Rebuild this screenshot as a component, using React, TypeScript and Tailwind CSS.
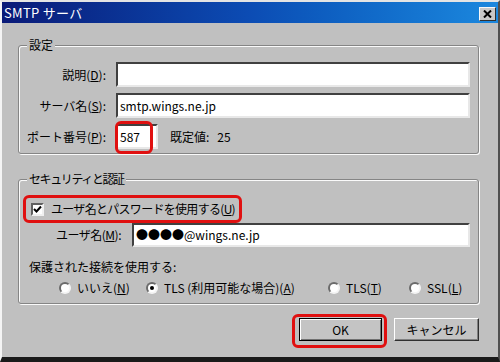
import React from 'react';

const font = { fontFamily: '"Noto Sans CJK JP", sans-serif' };

const Key: React.FC<{ k: string }> = ({ k }) => (
  <>
    (<span className="underline">{k}</span>)
  </>
);

const Sunken: React.FC<{ className?: string; children?: React.ReactNode }> = ({ className = '', children }) => (
  <div
    className={`flex items-center bg-white border-2 border-t-[#404040] border-l-[#404040] border-r-[#e8e8e8] border-b-[#e8e8e8] pl-[2px] text-black ${className}`}
  >
    {children}
  </div>
);

const Radio: React.FC<{ checked?: boolean; label: React.ReactNode; className?: string }> = ({
  checked = false,
  label,
  className = '',
}) => (
  <div className={`flex items-center gap-[6px] ${className}`}>
    <div className="w-[12px] h-[12px] rounded-full bg-white border-2 border-t-[#6a6a6a] border-l-[#6a6a6a] border-r-[#f4f4f4] border-b-[#f4f4f4] flex items-center justify-center">
      {checked && <div className="w-[4px] h-[4px] rounded-full bg-black" />}
    </div>
    <span className="whitespace-nowrap">{label}</span>
  </div>
);

const RedMark: React.FC<{ className: string }> = ({ className }) => (
  <div className={`absolute border-[3px] border-[#e01010] rounded-[6px] pointer-events-none ${className}`} />
);

const GroupBox: React.FC<{ title: string; titleClass?: string; className?: string; children: React.ReactNode }> = ({
  title,
  titleClass = '',
  className = '',
  children,
}) => (
  <div
    className={`border border-[#858585] rounded-[3px] shadow-[inset_1px_1px_0_#fafafa,1px_1px_0_#fafafa] ${className}`}
  >
    <div className={`-mt-[9px] ml-[8px] w-fit bg-[#c0c0c0] px-[2px] h-[16px] leading-[16px] ${titleClass}`}>{title}</div>
    {children}
  </div>
);

export default function App() {
  return (
    <div
      style={font}
      className="w-[500px] h-[362px] bg-[#c0c0c0] text-[12px] leading-[16px] text-black flex flex-col border-t-2 border-l-2 border-t-[#e4e4e4] border-l-[#f4f4f4] border-r-2 border-r-[#505050] border-b-[5px] border-b-[#1a1a1a] overflow-hidden"
    >
      {/* title bar */}
      <div className="h-[21px] shrink-0 flex items-center justify-between pl-[2px] pr-[2px] bg-linear-to-r from-[#0a1a78] via-[#0c4cb4] to-[#1c88de]">
        <span className="text-white text-[13px] tracking-[0.3px]">SMTP サーバ</span>
        <div className="mt-[2px] w-[17px] h-[14px] bg-[#c8c8c8] border border-t-[#f8f8f8] border-l-[#f8f8f8] border-r-[#303030] border-b-[#303030] flex items-center justify-center">
          <svg width="9" height="8" viewBox="0 0 9 8">
            <path d="M1 0.5 L8 7.5 M8 0.5 L1 7.5" stroke="#000" strokeWidth="2" />
          </svg>
        </div>
      </div>

      <div className="flex flex-col pt-[22px] pl-[16px] pr-[19px]">
        {/* 設定 */}
        <GroupBox title="設定" className="pb-[4px]">
          <div className="mt-[9px] grid grid-cols-[87px_1fr] gap-x-[10px] gap-y-[6px] pr-[8px] items-center">
            <div className="text-right">
              説明<Key k="D" />:
            </div>
            <Sunken className="h-[25px]" />
            <div className="text-right">
              サーバ名<Key k="S" />:
            </div>
            <Sunken className="h-[25px]">smtp.wings.ne.jp</Sunken>
            <div className="text-right">
              ポート番号<Key k="P" />:
            </div>
            <div className="flex items-center">
              <div className="relative">
                <Sunken className="h-[25px] w-[42px]">587</Sunken>
                <RedMark className="-left-[1px] -top-[3px] w-[38px] -bottom-[5px]" />
              </div>
              <span className="ml-[12px]">既定値:</span>
              <span className="ml-[8px]">25</span>
            </div>
          </div>
        </GroupBox>

        {/* セキュリティと認証 */}
        <GroupBox title="セキュリティと認証" titleClass="tracking-[-1.4px]" className="mt-[25px] pb-[7px]">
          <div className="relative mt-[12px] h-[20px] flex items-center pl-[12px]">
            <div className="w-[13px] h-[13px] bg-white border-2 border-t-[#606060] border-l-[#606060] border-r-[#f0f0f0] border-b-[#f0f0f0] flex items-center justify-center">
              <svg width="9" height="9" viewBox="0 0 9 9">
                <path d="M1 4 L3.5 6.5 L8 1.5" stroke="#000" strokeWidth="2" fill="none" />
              </svg>
            </div>
            <span className="ml-[7px] tracking-[-0.7px]">
              ユーザ名とパスワードを使用する<Key k="U" />
            </span>
            <RedMark className="left-[4px] w-[219px] -top-[4px] -bottom-[4px]" />
          </div>
          <div className="mt-[4px] flex items-center pr-[8px]">
            <div className="w-[102px] text-right tracking-[-0.5px]">
              ユーザ名<Key k="M" />:
            </div>
            <Sunken className="ml-[11px] flex-1 h-[24px]">●●●●@wings.ne.jp</Sunken>
          </div>
          <div className="mt-[12px] pl-[10px]">保護された接続を使用する:</div>
          <div className="mt-[5px] flex items-center pl-[40px] h-[16px]">
            <Radio className="w-[87px]" label={<>いいえ<Key k="N" /></>} />
            <Radio className="w-[182px]" checked label={<>TLS (利用可能な場合)<Key k="A" /></>} />
            <Radio className="w-[81px]" label={<>TLS<Key k="T" /></>} />
            <Radio label={<>SSL<Key k="L" /></>} />
          </div>
        </GroupBox>

        {/* buttons */}
        <div className="mt-[14px] flex justify-end gap-[12px]">
          <div className="relative">
            <button className="w-[83px] h-[23px] bg-[#c4c4c4] border border-black shadow-[inset_1px_1px_0_#fff,inset_-1px_-1px_0_#707070] flex items-center justify-center">
              OK
            </button>
            <RedMark className="-left-[7px] -right-[5px] -top-[4px] -bottom-[7px]" />
          </div>
          <button className="w-[85px] h-[23px] bg-[#c4c4c4] border border-t-white border-l-white border-r-[#303030] border-b-[#303030] shadow-[inset_-1px_-1px_0_#808080] flex items-center justify-center">
            キャンセル
          </button>
        </div>
      </div>
    </div>
  );
}
